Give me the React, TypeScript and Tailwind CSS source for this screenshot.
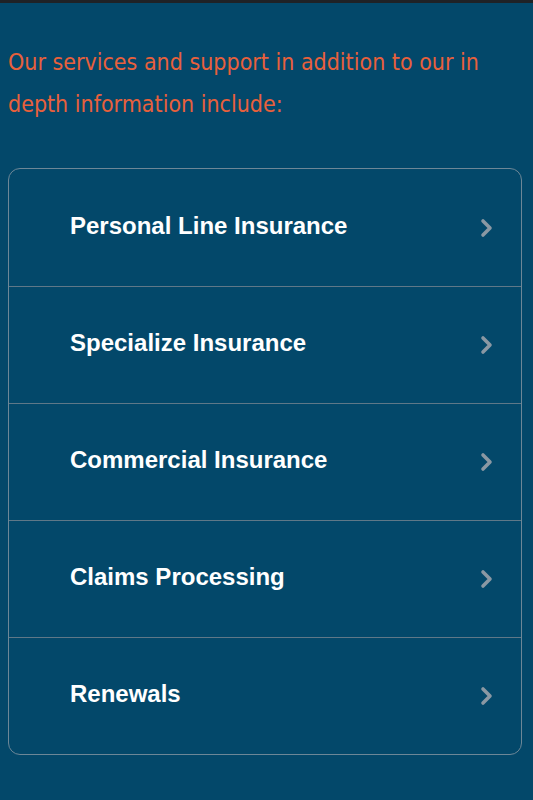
import React from "react";

const items = [
  "Personal Line Insurance",
  "Specialize Insurance",
  "Commercial Insurance",
  "Claims Processing",
  "Renewals",
];

function Chevron() {
  return (
    <svg width="18" height="22" viewBox="0 0 18 22" fill="none">
      <path d="M5 4 L12 11 L5 18" stroke="#8a98a3" strokeWidth="3.6" strokeLinecap="round" strokeLinejoin="round" />
    </svg>
  );
}

export default function App() {
  return (
    <div className="w-[533px] h-[800px] bg-[#03486a] overflow-hidden flex flex-col">
      <div className="h-[3px] bg-[#1f2226]" />
      <p
        className="mt-[38px] px-2 text-[23px] leading-[42px] text-[#e8603c]"
        style={{ fontFamily: '"DejaVu Sans Condensed", "DejaVu Sans", sans-serif' }}
      >
        Our services and support in addition to our in depth information include:
      </p>
      <div className="mx-2 mt-[43px] w-[514px] border border-[#6d8797] rounded-[12px] flex flex-col">
        {items.map((t, i) => (
          <div
            key={t}
            className={
              "h-[117px] flex items-center justify-between pl-[61px] pr-[25px] " +
              (i > 0 ? "border-t border-[#5f7888]" : "")
            }
          >
            <span
              className="text-white font-bold text-[24px] -mt-[4px]"
              style={{ fontFamily: '"Liberation Sans", Arial, sans-serif' }}
            >
              {t}
            </span>
            <Chevron />
          </div>
        ))}
      </div>
    </div>
  );
}
